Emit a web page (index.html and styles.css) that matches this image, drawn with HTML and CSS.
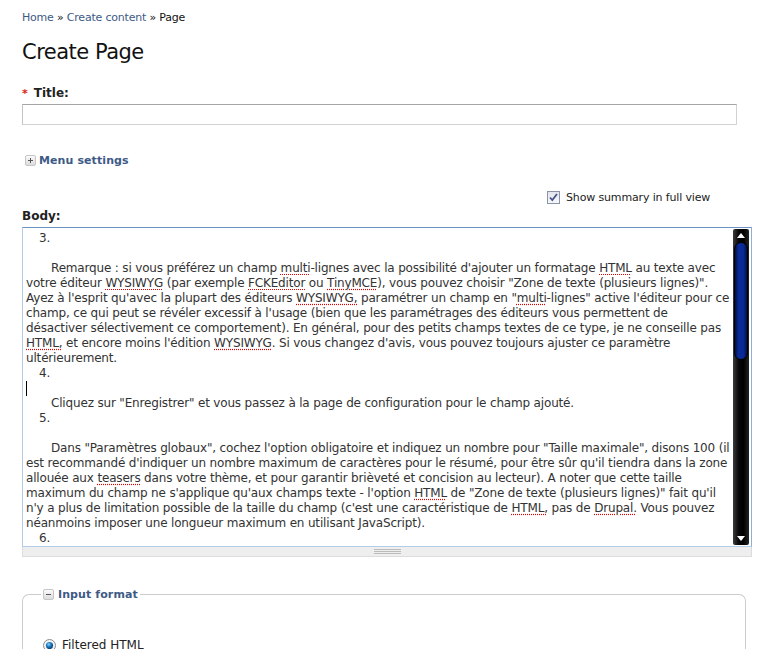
FILE: index.html
```html
<!DOCTYPE html>
<html>
<head>
<meta charset="utf-8">
<link rel="stylesheet" href="styles.css">
</head>
<body>
<div class="page">
  <div class="crumbs"><a href="#">Home</a> » <a href="#">Create content</a> » Page</div>
  <h1 class="title">Create Page</h1>

  <label class="lbl title-lbl"><span class="req">*</span>Title:</label>
  <div class="input"></div>

  <div class="menu"><span class="tog"><span class="tog-h"></span><span class="tog-v"></span></span><span class="menu-t">Menu settings</span></div>

  <div class="summary">
    <span class="cb"><svg width="11" height="11" viewBox="0 0 11 11"><path d="M2 5.5 L4.3 8 L9 2" fill="none" stroke="#46558a" stroke-width="1.8"/></svg></span>
    <span class="summary-t">Show summary in full view</span>
  </div>

  <div class="lbl body-lbl">Body:</div>
  <div class="ta">
    <div class="ta-text">
      <div class="ln num">3.</div>
      <div class="ln"></div>
      <div class="ln ind">Remarque : si vous préférez un champ <span class="sp">multi</span>-lignes avec la possibilité d'ajouter un formatage <span class="sp">HTML</span> au texte avec</div>
      <div class="ln">votre éditeur <span class="sp">WYSIWYG</span> (par exemple <span class="sp">FCKEditor</span> ou <span class="sp">TinyMCE</span>), vous pouvez choisir "Zone de texte (plusieurs lignes)".</div>
      <div class="ln">Ayez à l'esprit qu'avec la plupart des éditeurs <span class="sp">WYSIWYG,</span> paramétrer un champ en "<span class="sp">multi</span>-lignes" active l'éditeur pour ce</div>
      <div class="ln">champ, ce qui peut se révéler excessif à l'usage (bien que les paramétrages des éditeurs vous permettent de</div>
      <div class="ln">désactiver sélectivement ce comportement). En général, pour des petits champs textes de ce type, je ne conseille pas</div>
      <div class="ln"><span class="sp">HTML,</span> et encore moins l'édition <span class="sp">WYSIWYG</span>. Si vous changez d'avis, vous pouvez toujours ajuster ce paramètre</div>
      <div class="ln">ultérieurement.</div>
      <div class="ln num">4.</div>
      <div class="ln"><span class="caret"></span></div>
      <div class="ln ind">Cliquez sur "Enregistrer" et vous passez à la page de configuration pour le champ ajouté.</div>
      <div class="ln num">5.</div>
      <div class="ln"></div>
      <div class="ln ind">Dans "Paramètres globaux", cochez l'option obligatoire et indiquez un nombre pour "Taille maximale", disons 100 (il</div>
      <div class="ln">est recommandé d'indiquer un nombre maximum de caractères pour le résumé, pour être sûr qu'il tiendra dans la zone</div>
      <div class="ln">allouée aux <span class="sp">teasers</span> dans votre thème, et pour garantir brièveté et concision au lecteur). A noter que cette taille</div>
      <div class="ln">maximum du champ ne s'applique qu'aux champs texte - l'option <span class="sp">HTML</span> de "Zone de texte (plusieurs lignes)" fait qu'il</div>
      <div class="ln">n'y a plus de limitation possible de la taille du champ (c'est une caractéristique de <span class="sp">HTML,</span> pas de <span class="sp">Drupal.</span> Vous pouvez</div>
      <div class="ln">néanmoins imposer une longueur maximum en utilisant JavaScript).</div>
      <div class="ln num">6.</div>
    </div>
    <div class="sb">
      <div class="sb-btn"><span class="arr-up"></span></div>
      <div class="sb-thumb"></div>
      <div class="sb-track"></div>
      <div class="sb-btn"><span class="arr-down"></span></div>
    </div>
  </div>
  <div class="grip"><span class="grip-lines"></span></div>

  <fieldset class="fs">
    <legend class="fs-leg"><span class="tog"><span class="tog-h"></span></span><span class="fs-t">Input format</span></legend>
    <div class="radio-row">
      <span class="radio"><svg width="13" height="13" viewBox="0 0 13 13"><defs><radialGradient id="rg" cx="0.4" cy="0.35" r="0.7"><stop offset="0" stop-color="#8fd0f5"/><stop offset="0.45" stop-color="#1b7fc4"/><stop offset="1" stop-color="#062f63"/></radialGradient></defs><circle cx="6.5" cy="6.5" r="6" fill="#f4f4f4" stroke="#8c8c8c"/><circle cx="6.5" cy="6.5" r="3.6" fill="url(#rg)"/></svg></span>
      <span class="radio-t">Filtered HTML</span>
    </div>
  </fieldset>
</div>
</body>
</html>
```

FILE: styles.css
```css
html, body {
  margin: 0;
  padding: 0;
  background: #fff;
}
body {
  font-family: "DejaVu Sans", Verdana, sans-serif;
  color: #222;
}
.page {
  padding: 11px 24px 0 22px;
  width: 730px;
}
.crumbs {
  font-size: 11px;
  line-height: 14px;
  color: #111;
  letter-spacing: -0.2px;
}
.crumbs a {
  color: #3d5a86;
  text-decoration: none;
}
.title {
  font-size: 21px;
  line-height: 26px;
  font-weight: normal;
  letter-spacing: -0.5px;
  margin: 14px 0 0 0;
  color: #111;
}
.lbl {
  display: block;
  font-size: 12px;
  font-weight: bold;
  line-height: 16px;
  color: #222;
}
.title-lbl {
  margin-top: 20px;
  margin-bottom: 2px;
}
.req {
  color: #d4260f;
  font-size: 11px;
  margin-right: 6px;
}
.input {
  width: 713px;
  height: 19px;
  border: 1px solid #d2d2d2;
  border-top-color: #a5a5a5;
  border-left-color: #c4c4c4;
}
.menu {
  display: flex;
  align-items: center;
  gap: 3px;
  margin-top: 29px;
  padding-left: 3px;
  height: 12px;
}
.tog {
  position: relative;
  display: inline-block;
  width: 9px;
  height: 9px;
  border: 1px solid #c6c6c6;
  border-radius: 2px;
  background: linear-gradient(#fbfbfb, #dcdcdc);
}
.tog-h {
  position: absolute;
  left: 2px;
  top: 4px;
  width: 5px;
  height: 1px;
  background: #555;
}
.tog-v {
  position: absolute;
  left: 4px;
  top: 2px;
  width: 1px;
  height: 5px;
  background: #555;
}
.menu-t {
  font-size: 11px;
  font-weight: bold;
  color: #3d5a86;
  letter-spacing: 0.1px;
}
.summary {
  display: flex;
  align-items: center;
  gap: 6px;
  margin-top: 24px;
  padding-left: 525px;
  height: 14px;
}
.cb {
  display: inline-flex;
  align-items: center;
  justify-content: center;
  width: 11px;
  height: 11px;
  border: 1px solid #8a93a8;
  background: linear-gradient(#e2e5ec, #f7f8fa);
}
.summary-t {
  font-size: 11px;
  color: #222;
  white-space: nowrap;
  letter-spacing: -0.15px;
}
.body-lbl {
  margin-top: 4px;
}
.ta {
  display: flex;
  width: 728px;
  margin-top: 3px;
  border: 1px solid #b4cce6;
  border-top-color: #6a93c1;
  border-right-color: #8fb0d5;
}
.ta-text {
  flex: 1;
  padding: 3px 0 0 3px;
  font-size: 12px;
  line-height: 15px;
  letter-spacing: -0.17px;
  color: #333;
  overflow: hidden;
}
.ln {
  height: 15px;
  white-space: nowrap;
}
.num {
  padding-left: 13px;
}
.ind {
  padding-left: 25px;
}
.sp {
  text-decoration: underline dotted #e00000;
  text-underline-offset: 2px;
}
.caret {
  display: inline-block;
  width: 1px;
  height: 15px;
  background: #000;
  vertical-align: top;
}
.sb {
  width: 16px;
  margin: 1px 2px 1px 0;
  display: flex;
  flex-direction: column;
  border-radius: 2px;
  background: linear-gradient(to right, #3c3c3c, #080808 35%, #000 65%, #222);
}
.sb-btn {
  height: 13px;
  display: flex;
  align-items: center;
  justify-content: center;
}
.arr-up {
  width: 0;
  height: 0;
  border-left: 4px solid transparent;
  border-right: 4px solid transparent;
  border-bottom: 5px solid #fff;
}
.arr-down {
  width: 0;
  height: 0;
  border-left: 4px solid transparent;
  border-right: 4px solid transparent;
  border-top: 5px solid #fff;
}
.sb-thumb {
  height: 116px;
  margin: 0 1px;
  border: 1px solid #000;
  border-radius: 7px;
  background: linear-gradient(to right, #00103c, #0b2b9a 30%, #0a2996 70%, #00103c);
}
.sb-track {
  flex: 1;
}
.grip {
  width: 728px;
  height: 9px;
  background: #eee;
  border: 1px solid #ddd;
  border-top: none;
  display: flex;
  justify-content: center;
  align-items: center;
}
.grip-lines {
  width: 27px;
  height: 3px;
  border-top: 1px solid #bbb;
  border-bottom: 1px solid #bbb;
  background: linear-gradient(#eee 0, #eee 1px, #bbb 1px, #bbb 2px, #eee 2px);
}
.fs {
  margin: 31px 0 0 0;
  width: 686px;
  padding: 0 18px 0 18px;
  border: 1px solid #ccc;
  border-radius: 7px 7px 0 0;
  border-bottom: none;
  height: 60px;
}
.fs-leg {
  padding: 0 2px;
  display: flex;
  align-items: center;
  gap: 4px;
}
.fs-t {
  font-size: 11px;
  font-weight: bold;
  color: #3d5a86;
  letter-spacing: 0.1px;
}
.radio-row {
  display: flex;
  align-items: center;
  gap: 6px;
  margin-top: 37px;
  padding-left: 2px;
}
.radio {
  display: inline-flex;
  width: 13px;
  height: 13px;
}
.radio-t {
  font-size: 12px;
  color: #222;
}
```
